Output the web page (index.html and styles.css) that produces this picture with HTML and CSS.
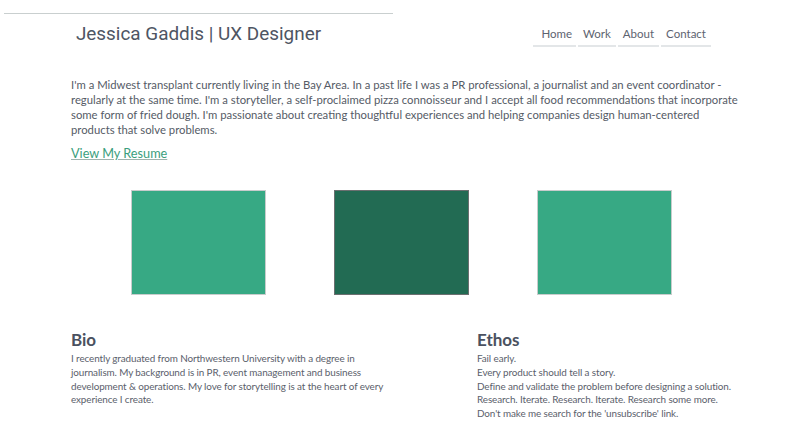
FILE: index.html
```html
<!DOCTYPE html>
<html lang="en">
<head>
<meta charset="utf-8">
<title>Jessica Gaddis | UX Designer</title>
<link rel="stylesheet" href="styles.css">
</head>
<body>
<header class="top">
  <div class="brand">Jessica Gaddis | UX Designer</div>
  <nav class="nav">
    <a href="#">Home</a>
    <a href="#">Work</a>
    <a href="#">About</a>
    <a href="#">Contact</a>
  </nav>
</header>
<section class="intro">
  <p>I'm a Midwest transplant currently living in the Bay Area. In a past life I was a PR professional, a journalist and an event coordinator -<br>regularly at the same time. I'm a storyteller, a self-proclaimed pizza connoisseur and I accept all food recommendations that incorporate<br>some form of fried dough. I'm passionate about creating thoughtful experiences and helping companies design human-centered<br>products that solve problems.</p>
  <a class="resume" href="#">View My Resume</a>
</section>
<section class="tiles">
  <div class="tile light"></div>
  <div class="tile dark"></div>
  <div class="tile light"></div>
</section>
<section class="cols">
  <div class="col bio">
    <h2>Bio</h2>
    <p>I recently graduated from Northwestern University with a degree in<br>journalism. My background is in PR, event management and business<br>development &amp; operations. My love for storytelling is at the heart of every<br>experience I create.</p>
  </div>
  <div class="col ethos">
    <h2>Ethos</h2>
    <p>Fail early.<br>Every product should tell a story.<br>Define and validate the problem before designing a solution.<br>Research. Iterate. Research. Iterate. Research some more.<br>Don't make me search for the 'unsubscribe' link.</p>
  </div>
</section>
</body>
</html>
```
FILE: styles.css
```css
html, body {
  margin: 0;
  padding: 0;
  background: #ffffff;
}
body {
  width: 800px;
  height: 425px;
  overflow: hidden;
  font-family: Lato, "Open Sans", sans-serif;
  color: #555b66;
}
.top {
  display: flex;
  align-items: flex-start;
}
.brand {
  margin-left: 4px;
  margin-top: 13px;
  width: 389px;
  border-top: 1px solid #c9cfcf;
  text-align: center;
  font-family: Roboto, sans-serif;
  font-size: 18.9px;
  color: #4e5563;
  padding-top: 8px;
  line-height: 24px;
}
.nav {
  margin-left: auto;
  margin-right: 89px;
  margin-top: 26px;
  display: flex;
  gap: 2px;
}
.nav a {
  font-size: 11.5px;
  color: #5d6370;
  text-decoration: none;
  padding: 0 5px 4px;
  line-height: 15px;
  border-bottom: 2px solid #e3e6e8;
}
.nav a:first-child {
  padding: 0 4px 4px 8px;
}
.intro {
  margin: 30px 0 0 71px;
  width: 700px;
}
.intro p {
  margin: 0;
  font-size: 11.3px;
  line-height: 15px;
  color: #555b66;
  white-space: nowrap;
}
.resume {
  display: inline-block;
  margin-top: 8px;
  font-size: 12.7px;
  color: #3a9e7c;
  text-decoration: underline;
  text-decoration-color: #9fb3ad;
}
.tiles {
  display: flex;
  gap: 68px;
  padding-left: 131px;
  margin-top: 29px;
}
.tile {
  width: 133px;
  height: 103px;
  border: 1px solid #c8cccc;
}
.light { background: #37a984; }
.dark { background: #226b53; border-color: #6b6f70; }
.cols {
  display: flex;
  margin-top: 35px;
}
.col h2 {
  margin: 0;
  font-size: 17px;
  font-weight: 700;
  color: #4a5160;
  line-height: 20px;
}
.col p {
  margin: 2px 0 0;
  font-size: 9.9px;
  line-height: 13.8px;
  color: #5a606b;
  white-space: nowrap;
}
.bio {
  margin-left: 71px;
  width: 320px;
}
.bio p {
  letter-spacing: -0.1px;
}
.ethos {
  margin-left: 86px;
  width: 300px;
}
.ethos p {
  letter-spacing: -0.1px;
}
```
